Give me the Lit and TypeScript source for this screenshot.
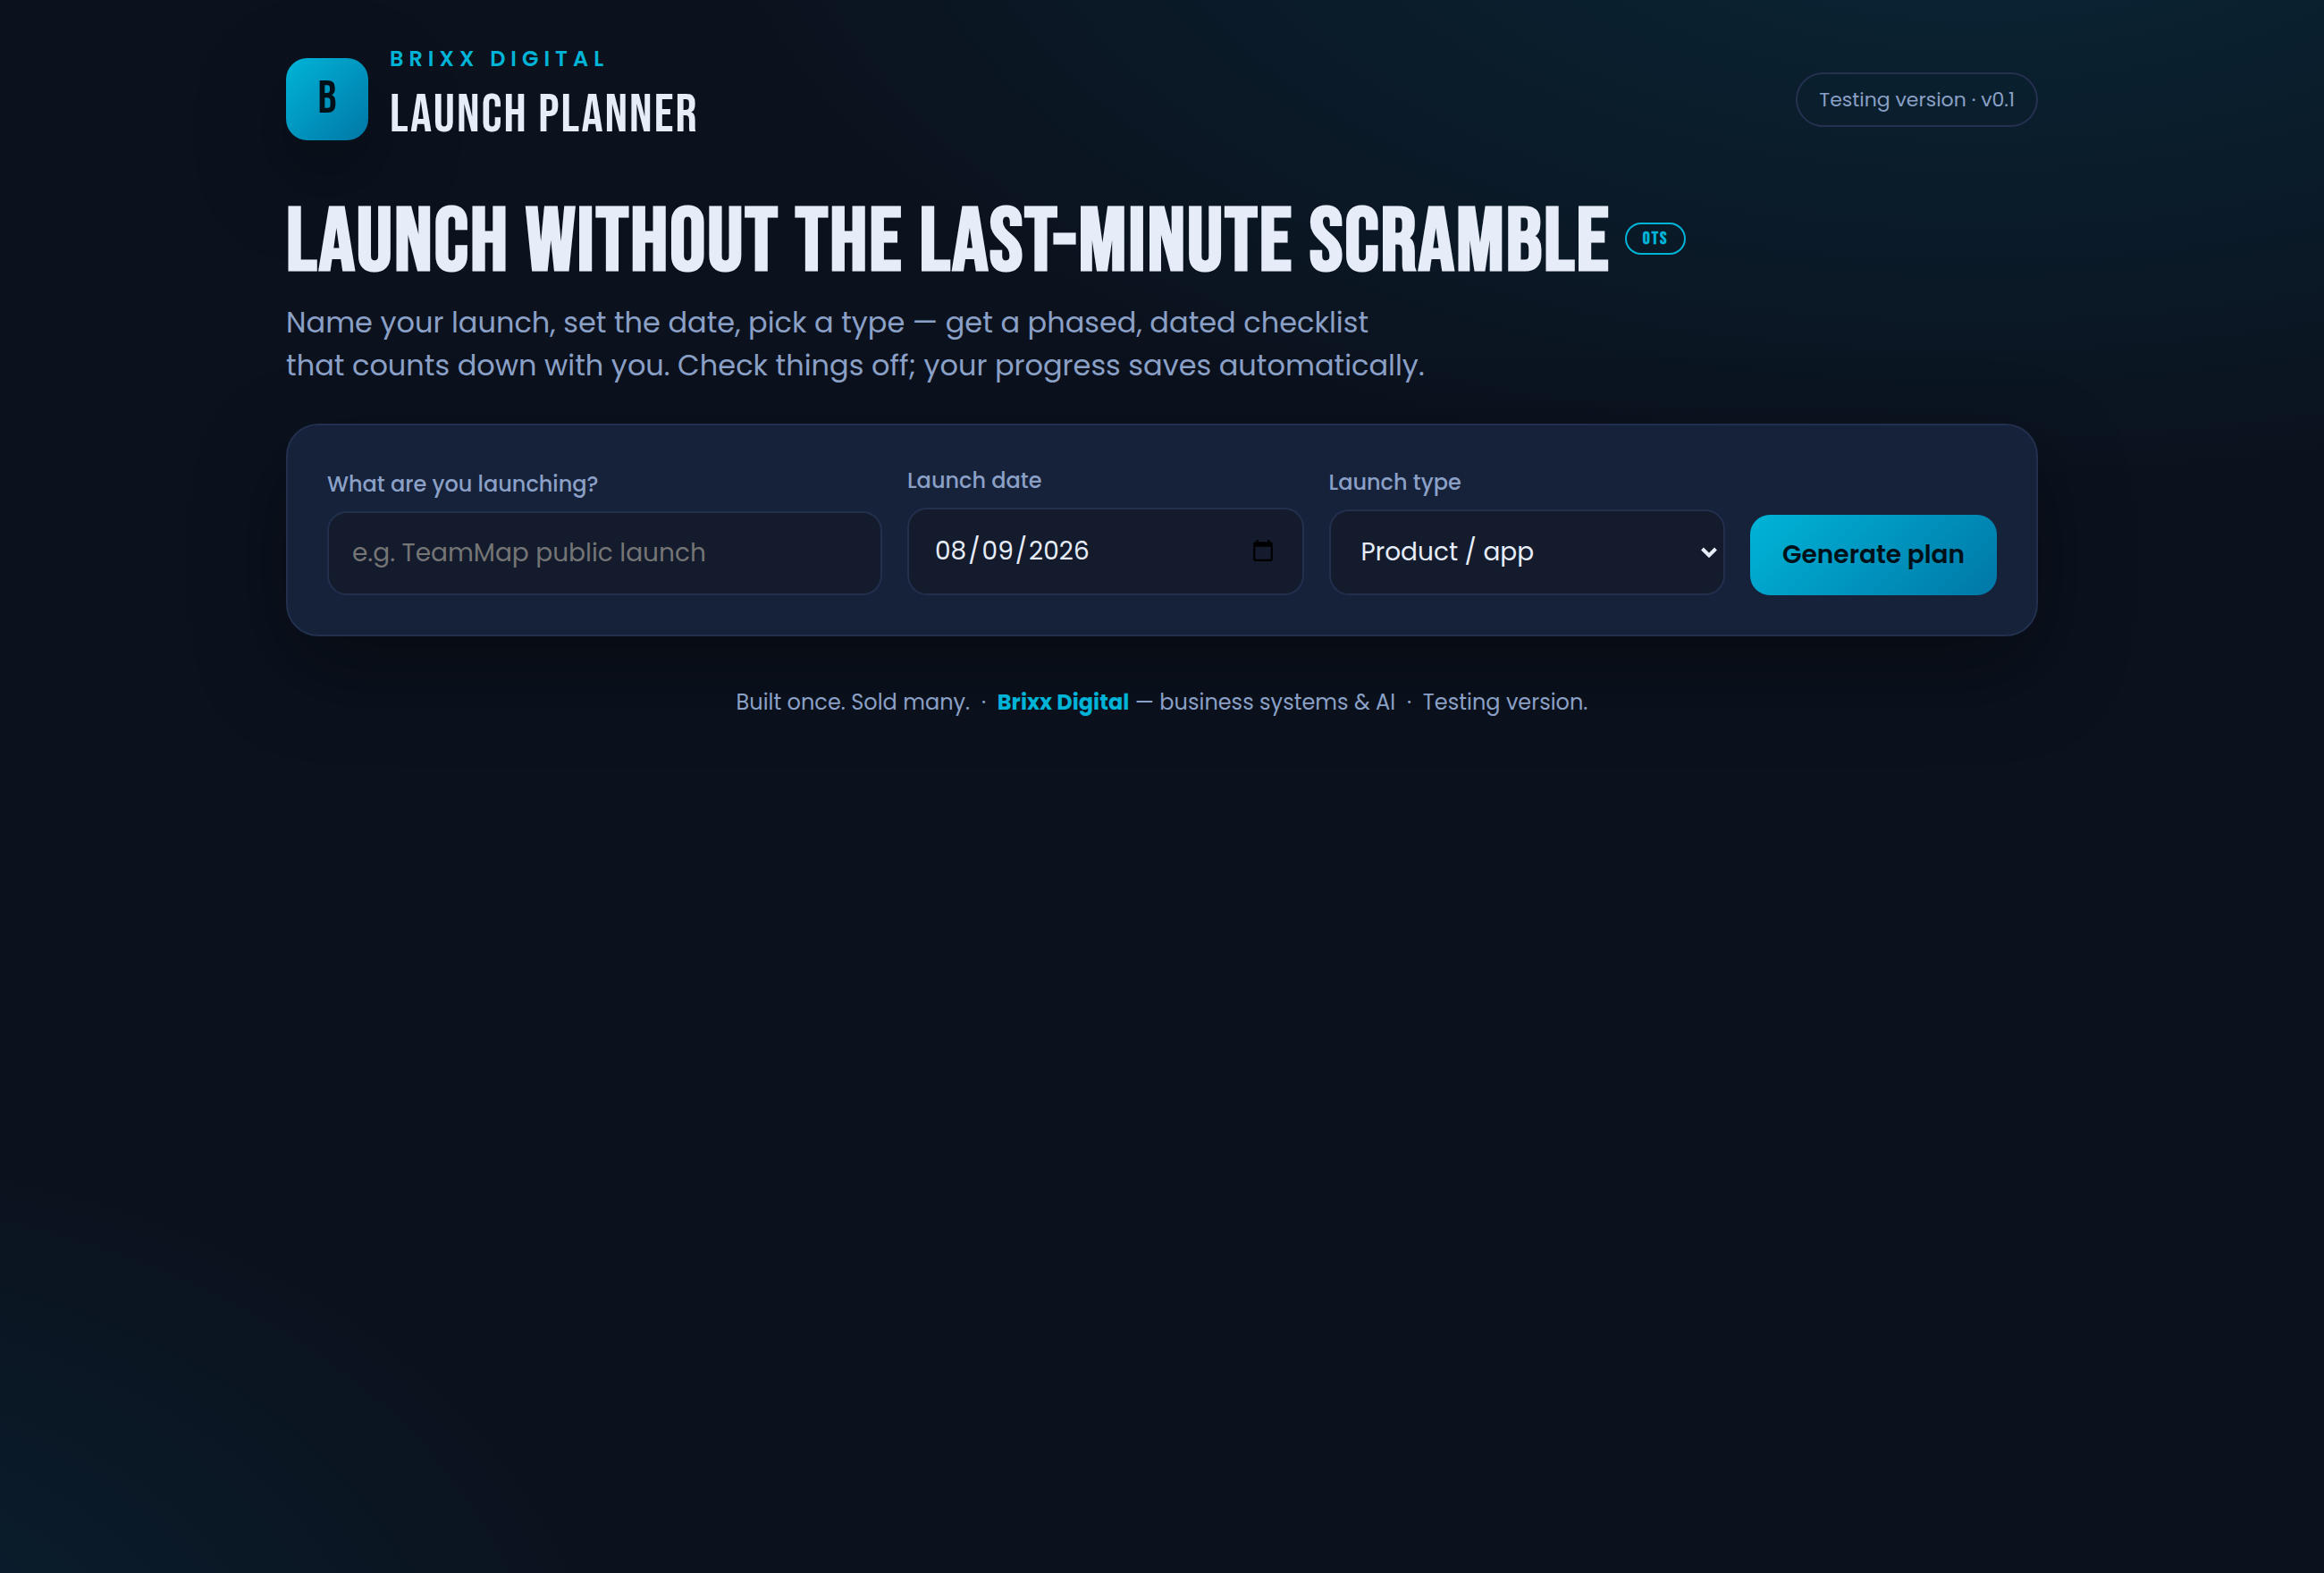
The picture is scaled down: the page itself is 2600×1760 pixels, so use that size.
import { LitElement, html, css } from "lit";
import { customElement, state } from "lit/decorators.js";

const LAUNCH_TYPES = ["Product / app", "Service", "Event", "Course", "Book"];

@customElement("app-root")
export class AppRoot extends LitElement {
  static styles = css`
    :host {
      --text: #e6edf8;
      --muted: #8ba0c6;
      --accent: #00b4d8;
      --line: #22304e;
      --ink: #001018;
      --brand: linear-gradient(135deg, #00b4d8, #0077a6);
      --shadow: 0 36px 100px rgba(0, 0, 0, 0.4);
      display: block;
      min-height: 100vh;
      box-sizing: border-box;
      color: var(--text);
      font: 400 32px/1.5 Poppins, "Open Sans", sans-serif;
      background:
        radial-gradient(2400px 1200px at 85% -10%, rgba(0, 170, 216, 0.14), transparent 60%),
        radial-gradient(1600px 1100px at -10% 110%, rgba(0, 130, 182, 0.14), transparent 60%),
        #0b121e;
    }
    .page {
      max-width: 1960px;
      margin: 0 auto;
      padding: 48px 40px;
    }
    header {
      display: flex;
      align-items: center;
      justify-content: space-between;
      gap: 24px;
      margin-bottom: 46px;
    }
    .brand {
      display: flex;
      align-items: center;
      gap: 24px;
    }
    .logo {
      display: grid;
      place-items: center;
      width: 92px;
      height: 92px;
      border-radius: 24px;
      background: var(--brand);
      box-shadow: var(--shadow);
      color: var(--ink);
      font: 400 52px/1 "Bebas Neue", sans-serif;
    }
    .eyebrow {
      color: var(--accent);
      font-size: 24px;
      font-weight: 600;
      letter-spacing: 6px;
      text-transform: uppercase;
    }
    .product {
      font-family: "Bebas Neue", sans-serif;
      font-size: 60px;
      letter-spacing: 2px;
    }
    .version {
      padding: 12px 24px;
      border: 2px solid #26304f;
      border-radius: 99px;
      color: var(--muted);
      font-size: 22px;
    }
    h1 {
      margin: 0 0 12px;
      font: 700 100px/105px "Bebas Neue", sans-serif;
      letter-spacing: 2px;
    }
    .badge {
      display: inline-block;
      vertical-align: middle;
      margin-left: 16px;
      padding: 6px 18px;
      border: 2px solid var(--accent);
      border-radius: 99px;
      color: var(--accent);
      font-size: 20px;
      line-height: 20px;
      letter-spacing: 2px;
    }
    .lead {
      max-width: 1280px;
      margin: 0 0 41px;
      color: var(--muted);
    }
    .card {
      display: grid;
      grid-template-columns: 1.4fr 1fr 1fr auto;
      align-items: end;
      gap: 28px;
      padding: 44px;
      border: 2px solid var(--line);
      border-radius: 36px;
      background: #16213a;
      box-shadow: var(--shadow);
    }
    .field {
      display: grid;
      gap: 12px;
      min-width: 0;
    }
    label {
      color: var(--muted);
      font-size: 24px;
      font-weight: 500;
    }
    .control {
      display: block;
      box-sizing: border-box;
      width: 100%;
      margin: 0;
      padding: 24px 26px;
      border: 2px solid var(--line);
      border-radius: 22px;
      background: #131b2d;
      color: var(--text);
      font: 400 28px/42px Poppins, "Open Sans", sans-serif;
    }
    .control::placeholder {
      color: #757575;
    }
    .date {
      height: 98px;
    }
    .date::-webkit-datetime-edit {
      padding: 0 1px;
    }
    .date::-webkit-datetime-edit-month-field,
    .date::-webkit-datetime-edit-day-field,
    .date::-webkit-datetime-edit-year-field {
      padding: 0 2px;
    }
    .date::-webkit-calendar-picker-indicator {
      margin-right: 2px;
    }
    .pick {
      position: relative;
    }
    .select {
      padding: 25px 34px;
      appearance: none;
    }
    .chevron {
      position: absolute;
      top: 41px;
      right: 8px;
      width: 20px;
      height: 14px;
      pointer-events: none;
      fill: none;
      stroke: var(--text);
      stroke-width: 4;
    }
    .generate {
      padding: 24px 36px;
      border: 0;
      border-radius: 22px;
      background: var(--brand);
      color: var(--ink);
      font: 600 28px/42px Poppins, "Open Sans", sans-serif;
      cursor: pointer;
    }
    footer {
      margin-top: 56px;
      color: var(--muted);
      font-size: 24px;
      text-align: center;
    }
    footer b {
      color: var(--accent);
    }
  `;

  @state() private launchName = "";
  @state() private launchDate = "2026-08-09";
  @state() private launchType = LAUNCH_TYPES[0];

  render() {
    return html`
      <div class="page">
        <header>
          <div class="brand">
            <div class="logo">B</div>
            <div>
              <div class="eyebrow">Brixx Digital</div>
              <div class="product">Launch Planner</div>
            </div>
          </div>
          <div class="version">Testing version · v0.1</div>
        </header>
        <main>
          <h1>Launch without the last-minute scramble<span class="badge">OTS</span></h1>
          <p class="lead">
            Name your launch, set the date, pick a type — get a phased, dated checklist
            that counts down with you. Check things off; your progress saves automatically.
          </p>
          <form class="card" @submit=${(e: Event) => e.preventDefault()}>
            <div class="field">
              <label for="name">What are you launching?</label>
              <input
                id="name"
                class="control"
                type="text"
                placeholder="e.g. TeamMap public launch"
                .value=${this.launchName}
                @input=${(e: Event) => (this.launchName = (e.target as HTMLInputElement).value)}
              />
            </div>
            <div class="field">
              <label for="date">Launch date</label>
              <input
                id="date"
                class="control date"
                type="date"
                .value=${this.launchDate}
                @change=${(e: Event) => (this.launchDate = (e.target as HTMLInputElement).value)}
              />
            </div>
            <div class="field">
              <label for="type">Launch type</label>
              <div class="pick">
                <select
                  id="type"
                  class="control select"
                  @change=${(e: Event) => (this.launchType = (e.target as HTMLSelectElement).value)}
                >
                  ${LAUNCH_TYPES.map(
                    (t) => html`<option ?selected=${t === this.launchType}>${t}</option>`
                  )}
                </select>
                <svg class="chevron" viewBox="0 0 20 14" aria-hidden="true">
                  <path d="M2.5 3 10 10.5 17.5 3" />
                </svg>
              </div>
            </div>
            <button class="generate" type="submit">Generate plan</button>
          </form>
        </main>
        <footer>
          Built once. Sold many. &nbsp;·&nbsp; <b>Brixx Digital</b> — business systems &amp; AI
          &nbsp;·&nbsp; Testing version.
        </footer>
      </div>
    `;
  }
}
